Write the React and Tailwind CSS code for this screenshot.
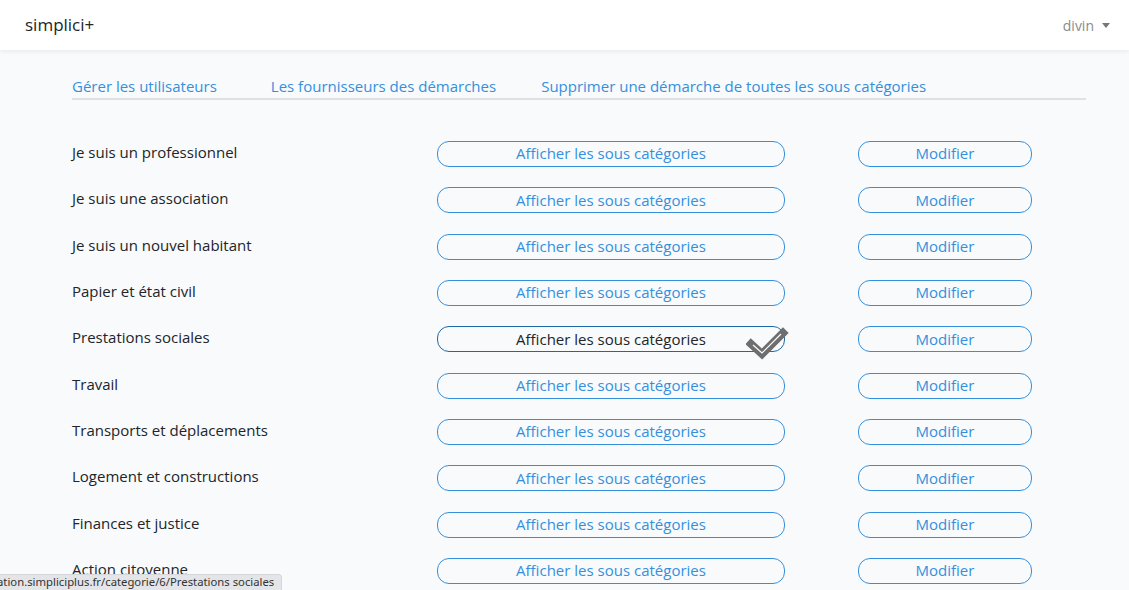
import React from "react";

const rows = [
  "Je suis un professionnel",
  "Je suis une association",
  "Je suis un nouvel habitant",
  "Papier et état civil",
  "Prestations sociales",
  "Travail",
  "Transports et déplacements",
  "Logement et constructions",
  "Finances et justice",
  "Action citoyenne",
];

export default function App() {
  return (
    <div
      className="relative h-[590px] w-[1129px] overflow-hidden bg-[#f8fafc] text-[#212529]"
      style={{ fontFamily: "'Open Sans', 'Noto Sans', sans-serif" }}
    >
      <header className="flex h-[50px] items-center justify-between bg-white pl-[25px] pr-[19px] shadow-[0_2px_4px_rgba(0,0,0,0.06)]">
        <span className="text-[17px] text-[#212529]">simplici+</span>
        <span className="flex items-center gap-[8px] text-[14px] text-[#8a8a8a]">
          divin
          <span className="inline-block h-0 w-0 border-x-[4.5px] border-t-[5px] border-x-transparent border-t-[#777]"></span>
        </span>
      </header>

      <div className="ml-[72px] w-[1014px]">
        <nav className="mt-[26px] flex h-[24px] items-center border-b-2 border-[#dee2e6] pb-[2px] text-[15px] text-[#3490dc]">
          <span>Gérer les utilisateurs</span>
          <span className="ml-[54px]">Les fournisseurs des démarches</span>
          <span className="ml-[45px]">Supprimer une démarche de toutes les sous catégories</span>
        </nav>

        <div className="mt-[41px]">
          {rows.map((label, i) => {
            const hovered = i === 4;
            return (
              <div key={label} className="flex h-[46.33px] items-start text-[15px]">
                <div className="w-[365px] leading-[23px]">{label}</div>
                <div className="relative">
                  <div
                    className={
                      "flex h-[26px] w-[348px] items-center justify-center rounded-[12px] border pb-[1px] " +
                      (hovered
                        ? "border-[#1d68a7] text-[#212529]"
                        : "border-[#3490dc] text-[#3490dc]")
                    }
                  >
                    Afficher les sous catégories
                  </div>
                  {hovered && (
                    <svg
                      className="absolute left-[309px] top-[0px]"
                      width="44"
                      height="34"
                      viewBox="0 0 44 34"
                    >
                      <polyline
                        points="5,18 16,28 37,7"
                        fill="none"
                        stroke="#6e6e6e"
                        strokeWidth="8"
                        strokeLinecap="square"
                        strokeLinejoin="miter"
                      />
                      <polyline
                        points="7,19 16,27 35,8"
                        fill="none"
                        stroke="#ffffff"
                        strokeWidth="1.2"
                      />
                    </svg>
                  )}
                </div>
                <div className="ml-[73px] flex h-[26px] w-[174px] items-center justify-center rounded-[12px] border border-[#3490dc] pb-[1px] text-[#3490dc]">
                  Modifier
                </div>
              </div>
            );
          })}
        </div>
      </div>

      <div
        className="absolute bottom-0 left-0 flex h-[16px] items-center overflow-hidden whitespace-nowrap rounded-tr-[4px] border-t border-r border-[#d4d6da] bg-[#e3e5e8] pr-[7px] text-[11.3px] text-[#333]"
        style={{ fontFamily: "'Noto Sans', 'DejaVu Sans', sans-serif" }}
      >
        <span className="ml-[-3px]">ation.simpliciplus.fr/categorie/6/Prestations sociales</span>
      </div>
    </div>
  );
}
